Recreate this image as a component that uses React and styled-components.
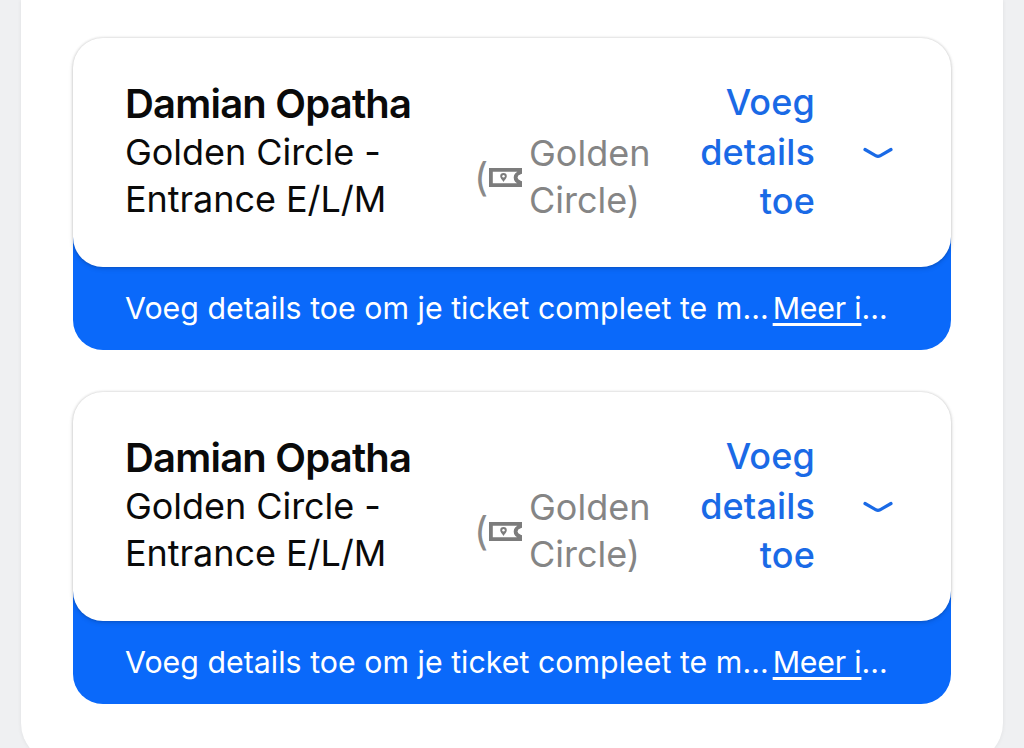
import React from 'react';
import styled, { createGlobalStyle } from 'styled-components';

const GlobalStyle = createGlobalStyle`
  html, body {
    margin: 0;
    height: 748px;
    overflow: hidden;
    background: #eff0f2;
    font-family: Inter, "Liberation Sans", sans-serif;
  }
`;

const Panel = styled.div`
  box-sizing: border-box;
  width: 982px;
  height: 763px;
  margin-left: 21px;
  padding: 38px 52px 0;
  background: #fff;
  border-radius: 0 0 40px 40px;
  box-shadow: 0 0 4px rgba(0, 0, 0, 0.07);
  display: flex;
  flex-direction: column;
  gap: 42px;
`;

const Card = styled.section`
  display: flex;
  flex-direction: column;
`;

const Head = styled.div`
  position: relative;
  z-index: 1;
  box-sizing: border-box;
  height: 229px;
  padding-left: 52px;
  display: flex;
  align-items: center;
  background: #fff;
  border-radius: 30px;
  box-shadow: 0 0 3px rgba(0, 0, 0, 0.2), 0 2px 5px rgba(0, 0, 0, 0.12);
`;

const Main = styled.div`
  width: 351px;
  flex: none;
  margin-bottom: 4px;
  color: #0a0a0a;
  font-size: 36px;
  line-height: 47px;
  letter-spacing: -0.05px;
`;

const Name = styled.div`
  font-size: 40px;
  font-weight: 600;
  line-height: 50px;
  letter-spacing: -0.8px;
`;

const Pass = styled.div`
  width: 176px;
  flex: none;
  align-self: flex-end;
  margin-bottom: 43px;
  display: flex;
  align-items: center;
  color: #858585;
  font-size: 36px;
  line-height: 47px;
`;

const Paren = styled.span`
  width: 14px;
  margin-left: -2px;
  margin-right: 1px;
  flex: none;
  font-size: 39px;
  line-height: 40px;
  color: #8a8a8a;
`;

const PassIcon = styled.svg`
  width: 33px;
  height: 19px;
  flex: none;
  margin-right: 7px;
`;

const Action = styled.div`
  width: 163px;
  flex: none;
  text-align: right;
  color: #1a6ae6;
  font-size: 36px;
  font-weight: 500;
  line-height: 49.5px;
  letter-spacing: 0.15px;
`;

const Chevron = styled.svg`
  width: 30px;
  height: 14px;
  flex: none;
  margin-left: 48px;
`;

const Notice = styled.div`
  box-sizing: border-box;
  height: 113px;
  margin-top: -30px;
  padding: 28px 0 0 52px;
  display: flex;
  align-items: center;
  gap: 4px;
  background: #0a69fa;
  border-radius: 0 0 30px 30px;
  color: #fff;
  font-size: 30.3px;
  letter-spacing: 0.03px;
  white-space: nowrap;
`;

const NoticeLink = styled.a`
  letter-spacing: -0.2px;
  text-decoration: underline;
  text-underline-offset: 4px;
`;

const TicketGlyph = () => (
  <PassIcon viewBox="0 0 33 19">
    <path
      d="M1.900 1.900H31.100V4.500c-3 1-4.500 3-4.500 5s1.500 4 4.500 5V17.100H1.900z"
      fill="none"
      stroke="#7c7c7c"
      strokeWidth="3.800"
    />
    <path
      d="M14.500 5a3.300 3.300 0 0 1 3.300 3.300c0 1.900-1.800 3.300-3.300 5.700-1.500-2.400-3.300-3.800-3.300-5.700A3.300 3.300 0 0 1 14.500 5z"
      fill="#7c7c7c"
    />
    <circle cx="14.500" cy="8.300" r="1.200" fill="#fff" />
  </PassIcon>
);

const Ticket = ({ name }) => (
  <Card>
    <Head>
      <Main>
        <Name>{name}</Name>
        Golden Circle -<br />
        Entrance E/L/M
      </Main>
      <Pass>
        <Paren>(</Paren>
        <TicketGlyph />
        <span>Golden Circle)</span>
      </Pass>
      <Action>Voeg details toe</Action>
      <Chevron viewBox="0 0 30 14">
        <path
          d="M2 3.500 13 9.800q2 1 4 0L28 3.500"
          fill="none"
          stroke="#1a6ae6"
          strokeWidth="3.200"
          strokeLinecap="round"
        />
      </Chevron>
    </Head>
    <Notice>
      <span>Voeg details toe om je ticket compleet te m...</span>
      <span>
        <NoticeLink>Meer i</NoticeLink>...
      </span>
    </Notice>
  </Card>
);

export default function App() {
  return (
    <>
      <GlobalStyle />
      <Panel>
        <Ticket name="Damian Opatha" />
        <Ticket name="Damian Opatha" />
      </Panel>
    </>
  );
}
